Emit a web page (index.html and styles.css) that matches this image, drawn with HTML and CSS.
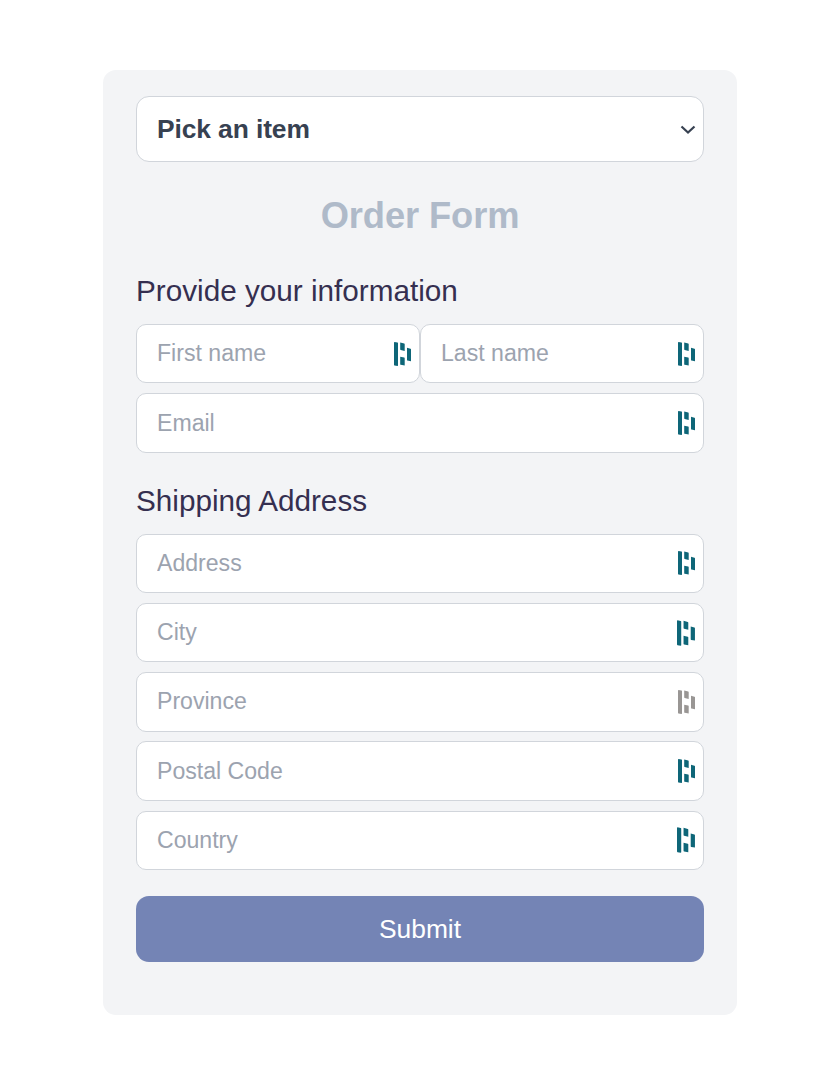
FILE: index.html
```html
<!DOCTYPE html>
<html lang="en">
<head>
<meta charset="utf-8">
<title>Order Form</title>
<link rel="stylesheet" href="styles.css">
</head>
<body>
<svg class="symbols" aria-hidden="true">
  <symbol id="mark" viewBox="0 0 18 24">
    <path d="M0 .4Q0 0 .5 0L3.5 .6Q4 .7 4 1.2V23.6Q4 24 3.5 24L.5 23.5Q0 23.4 0 23ZM6.2 .5 10.2 1.5Q10.7 1.7 10.7 2.2V9L6.7 7.9Q6.2 7.7 6.2 7.2ZM6.2 14.7 10.2 15.6Q10.7 15.8 10.7 16.3V23.5L6.7 22.8Q6.2 22.7 6.2 22.2ZM13 5.8 16.5 6.7Q17 6.9 17 7.4V19.2L13.5 18.6Q13 18.4 13 17.9Z"/>
  </symbol>
</svg>
<form class="card">
  <div class="select">
    <span>Pick an item</span>
    <svg class="chevron" viewBox="0 0 16 10"><path d="M1.5 1.5 8 7.5 14.5 1.5"/></svg>
  </div>
  <h1 class="title">Order Form</h1>
  <h2 class="heading">Provide your information</h2>
  <div class="fields">
    <div class="row">
      <label class="field"><input class="input" placeholder="First name"><svg class="mark"><use href="#mark"/></svg></label>
      <label class="field"><input class="input" placeholder="Last name"><svg class="mark"><use href="#mark"/></svg></label>
    </div>
    <label class="field"><input class="input input-email" placeholder="Email"><svg class="mark"><use href="#mark"/></svg></label>
  </div>
  <h2 class="heading heading-shipping">Shipping Address</h2>
  <div class="fields">
    <label class="field"><input class="input" placeholder="Address"><svg class="mark"><use href="#mark"/></svg></label>
    <label class="field"><input class="input" placeholder="City"><svg class="mark mark-large"><use href="#mark"/></svg></label>
    <label class="field"><input class="input" placeholder="Province"><svg class="mark mark-muted"><use href="#mark"/></svg></label>
    <label class="field"><input class="input" placeholder="Postal Code"><svg class="mark"><use href="#mark"/></svg></label>
    <label class="field"><input class="input" placeholder="Country"><svg class="mark mark-large"><use href="#mark"/></svg></label>
  </div>
  <button class="submit" type="button">Submit</button>
</form>
</body>
</html>
```
FILE: styles.css
```css
* { box-sizing: border-box; }
body {
  margin: 0;
  padding-top: 70px;
  background: #fff;
  font-family: "Liberation Sans", Arial, sans-serif;
}
.symbols { display: none; }
.card {
  width: 634px;
  height: 945px;
  margin-left: 103px;
  padding: 26px 33px;
  border-radius: 13px;
  background: #f3f4f6;
}
.select {
  display: flex;
  align-items: center;
  justify-content: space-between;
  height: 66px;
  padding: 0 7px 0 20px;
  border: 1px solid #d1d5db;
  border-radius: 13px;
  background: #fff;
  color: #374151;
  font-size: 26.4px;
  font-weight: 700;
  letter-spacing: -.1px;
}
.chevron {
  width: 16px;
  height: 10px;
  margin-top: 1px;
  fill: none;
  stroke: #374151;
  stroke-width: 2.2;
}
.title {
  margin: 32px 0 0;
  color: #afbac9;
  font-size: 36.3px;
  line-height: 43px;
  letter-spacing: -.1px;
  text-align: center;
}
.heading {
  margin: 33px 0 12px;
  color: #352f50;
  font-size: 29.7px;
  font-weight: 400;
  line-height: 42px;
}
.heading-shipping { margin-top: 26.9px; }
.fields {
  display: flex;
  flex-direction: column;
  gap: 9.9px;
}
.row { display: flex; }
.field {
  display: flex;
  flex: 1;
  align-items: center;
  min-width: 0;
  height: 59.4px;
  min-height: 59.4px;
  padding: 0 7px 0 20px;
  border: 1px solid #d1d5db;
  border-radius: 10px;
  background: #fff;
}
.input {
  flex: 1;
  min-width: 0;
  padding: 0;
  border: 0;
  outline: 0;
  background: transparent;
  font: 23.1px "Liberation Sans", Arial, sans-serif;
}
.input::placeholder { color: #9ca3af; }
.input-email { padding-top: 1px; }
.mark {
  flex: none;
  width: 18px;
  height: 24px;
  fill: #0e6678;
}
.mark-large { width: 19px; height: 26px; }
.mark-muted { fill: #999694; }
.submit {
  display: block;
  width: 100%;
  height: 66px;
  margin-top: 26.4px;
  border: 0;
  border-radius: 13px;
  background: #7484b5;
  color: #fff;
  font: 26.4px "Liberation Sans", Arial, sans-serif;
}
```
